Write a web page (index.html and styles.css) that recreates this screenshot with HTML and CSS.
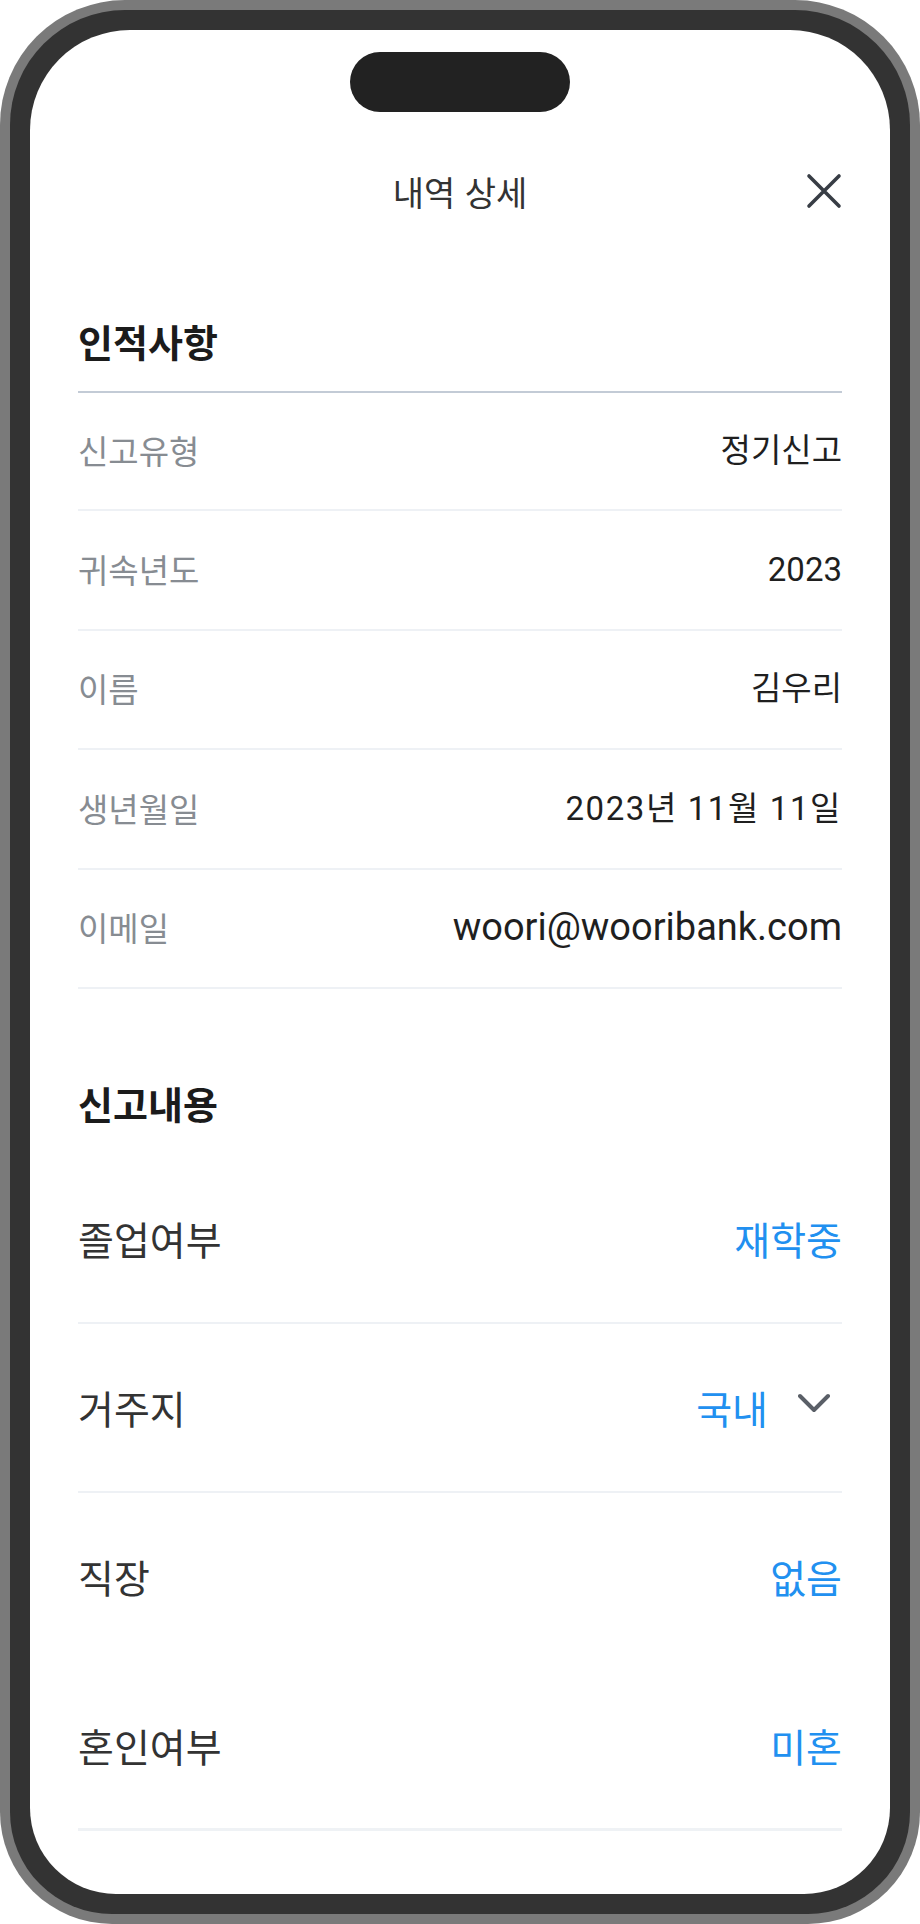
FILE: index.html
```html
<!DOCTYPE html>
<html lang="ko">
<head>
<meta charset="utf-8">
<title>내역 상세</title>
<link rel="stylesheet" href="styles.css">
</head>
<body>
<div class="phone">
  <div class="bezel">
    <div class="screen">
      <div class="island"></div>

      <header class="topbar">
        <h1 class="topbar-title">내역 상세</h1>
        <button class="close-btn" type="button" aria-label="닫기">
          <svg viewBox="0 0 36 36" width="36" height="36"><path d="M3 3 L33 33 M33 3 L3 33"/></svg>
        </button>
      </header>

      <section class="section section-personal">
        <h2 class="section-title section-title-ruled">인적사항</h2>
        <dl class="info-list">
          <div class="info-row"><dt>신고유형</dt><dd>정기신고</dd></div>
          <div class="info-row"><dt>귀속년도</dt><dd>2023</dd></div>
          <div class="info-row"><dt>이름</dt><dd>김우리</dd></div>
          <div class="info-row"><dt>생년월일</dt><dd class="info-date">2023년 11월 11일</dd></div>
          <div class="info-row"><dt>이메일</dt><dd class="info-email">woori@wooribank.com</dd></div>
        </dl>
      </section>

      <section class="section section-report">
        <h2 class="section-title">신고내용</h2>
        <dl class="report-list">
          <div class="report-row"><dt>졸업여부</dt><dd class="report-value">재학중</dd></div>
          <div class="report-row"><dt>거주지</dt><dd class="report-value report-select">국내<svg class="chevron" viewBox="0 0 44 44" width="44" height="44"><polyline points="2,11 16,25 30,11"/></svg></dd></div>
          <div class="report-row report-row-plain"><dt>직장</dt><dd class="report-value">없음</dd></div>
          <div class="report-row report-row-last"><dt>혼인여부</dt><dd class="report-value">미혼</dd></div>
        </dl>
      </section>
    </div>
  </div>
</div>
</body>
</html>
```

FILE: styles.css
```css
* {
  box-sizing: border-box;
  margin: 0;
  padding: 0;
}

html,
body {
  background: #ffffff;
}

body {
  width: 920px;
  height: 1924px;
  font-family: "Noto Sans CJK KR", "Noto Sans", sans-serif;
  overflow: hidden;
}

/* device frame */
.phone {
  width: 920px;
  height: 1924px;
  padding: 10px;
  background: #7a7a7a;
  border-radius: 125px 125px 112px 112px;
}

.bezel {
  height: 100%;
  padding: 20px;
  background: #333333;
  border-radius: 115px 115px 102px 102px;
}

.screen {
  height: 100%;
  padding: 22px 48px 0;
  background: #ffffff;
  border-radius: 100px 100px 86px 86px;
  overflow: hidden;
}

.island {
  width: 220px;
  height: 60px;
  margin: 0 auto;
  border-radius: 30px;
  background: #222222;
}

/* top bar */
.topbar {
  display: grid;
  grid-template-columns: 36px 1fr 36px;
  align-items: center;
  height: 100px;
  margin-top: 30px;
}

.topbar-title {
  grid-column: 2;
  text-align: center;
  font-size: 34px;
  font-weight: 400;
  line-height: 48px;
  color: #333333;
}

.close-btn {
  grid-column: 3;
  display: block;
  width: 36px;
  height: 36px;
  border: 0;
  background: none;
  margin-top: -3px;
}

.close-btn svg {
  display: block;
  fill: none;
  stroke: #383d45;
  stroke-width: 3.6;
  stroke-linecap: round;
}

/* sections */
.section-personal {
  padding-top: 75px;
}

.section-report {
  padding-top: 90px;
}

.section-title {
  font-size: 38px;
  font-weight: 700;
  line-height: 48px;
  color: #1b1b1b;
  padding-bottom: 28px;
}

.section-title-ruled {
  padding-bottom: 26px;
  border-bottom: 2px solid #c3cbd6;
}

/* personal info list */
.info-row {
  display: flex;
  justify-content: space-between;
  align-items: center;
  height: 118px;
  border-bottom: 2px solid #eef1f5;
  font-size: 33px;
  line-height: 1.2;
}

.info-row + .info-row {
  height: 119.5px;
}

.info-row dt {
  color: #878c92;
}

.info-row dd {
  font-family: Roboto, "Noto Sans CJK KR", sans-serif;
  color: #1f1f1f;
}

.info-row .info-date {
  letter-spacing: 1.6px;
}

.info-row .info-email {
  font-size: 38px;
}

/* report list */
.report-row {
  display: flex;
  justify-content: space-between;
  align-items: center;
  height: 169px;
  border-bottom: 2px solid #eef1f5;
  font-size: 39px;
  line-height: 1.2;
}

.report-row dt {
  color: #333333;
}

.report-value {
  color: #2190f0;
}

.report-select {
  display: flex;
  align-items: center;
  gap: 30px;
}

.chevron {
  display: block;
  fill: none;
  stroke: #5a5f67;
  stroke-width: 4;
  stroke-linecap: round;
  stroke-linejoin: round;
}

.report-row-plain {
  border-bottom-color: transparent;
}

.report-row-last {
  border-bottom: 3px solid #eff2f5;
}
```
